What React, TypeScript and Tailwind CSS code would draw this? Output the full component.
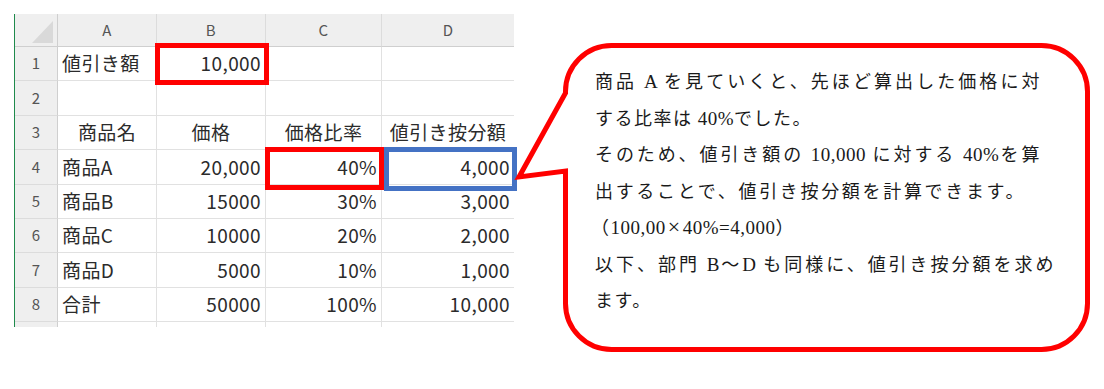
import React from 'react';

type Align = 'l' | 'r' | 'c';

interface Row {
  n: string;
  cells: { t: string; a: Align }[];
}

const rows: Row[] = [
  { n: '1', cells: [{ t: '値引き額', a: 'l' }, { t: '10,000', a: 'r' }, { t: '', a: 'l' }, { t: '', a: 'l' }] },
  { n: '2', cells: [{ t: '', a: 'l' }, { t: '', a: 'l' }, { t: '', a: 'l' }, { t: '', a: 'l' }] },
  { n: '3', cells: [{ t: '商品名', a: 'c' }, { t: '価格', a: 'c' }, { t: '価格比率', a: 'c' }, { t: '値引き按分額', a: 'c' }] },
  { n: '4', cells: [{ t: '商品A', a: 'l' }, { t: '20,000', a: 'r' }, { t: '40%', a: 'r' }, { t: '4,000', a: 'r' }] },
  { n: '5', cells: [{ t: '商品B', a: 'l' }, { t: '15000', a: 'r' }, { t: '30%', a: 'r' }, { t: '3,000', a: 'r' }] },
  { n: '6', cells: [{ t: '商品C', a: 'l' }, { t: '10000', a: 'r' }, { t: '20%', a: 'r' }, { t: '2,000', a: 'r' }] },
  { n: '7', cells: [{ t: '商品D', a: 'l' }, { t: '5000', a: 'r' }, { t: '10%', a: 'r' }, { t: '1,000', a: 'r' }] },
  { n: '8', cells: [{ t: '合計', a: 'l' }, { t: '50000', a: 'r' }, { t: '100%', a: 'r' }, { t: '10,000', a: 'r' }] },
];

const alignClass: Record<Align, string> = {
  l: 'justify-start',
  r: 'justify-end',
  c: 'justify-center',
};

// Latin run inside the callout text (Century-like serif)
function L({ children }: { children: React.ReactNode }) {
  return <span className="text-[19px] tracking-[0.5px] [font-family:'Liberation_Serif',serif]">{children}</span>;
}

function Sheet() {
  return (
    <div className="relative w-[500px] border-l border-[#1f8a4c] text-[19px] tracking-[0.4px] text-[#2b2b2b] [font-family:'Noto_Sans_CJK_JP',sans-serif]">
      <div className="grid grid-cols-[43px_99px_109px_116px_132px]">
        {/* Column headers */}
        <div className="h-[33px] bg-[#efefef] border-r border-b border-[#cfcfcf] flex items-end justify-end pr-[4px] pb-[3px]">
          <svg width="21" height="22" viewBox="0 0 21 22">
            <polygon points="0,22 21,22 21,0" fill="#d9d9d9" />
          </svg>
        </div>
        {['A', 'B', 'C', 'D'].map((c, i) => (
          <div
            key={c}
            className={`h-[33px] bg-[#efefef] border-b border-[#cfcfcf] flex items-center justify-center text-[15px] text-[#555] ${
              i < 3 ? 'border-r border-r-[#dcdcdc]' : ''
            }`}
          >
            {c}
          </div>
        ))}

        {rows.map((r) => (
          <React.Fragment key={r.n}>
            <div className="h-[34.4px] bg-[#efefef] border-r border-r-[#cfcfcf] border-b border-b-[#dcdcdc] flex items-center justify-center text-[15px] text-[#555]">
              {r.n}
            </div>
            {r.cells.map((c, i) => (
              <div
                key={i}
                className={`h-[34.4px] border-b border-[#e1e1e1] flex items-center px-[4px] whitespace-nowrap ${alignClass[c.a]} ${
                  i < 3 ? 'border-r' : ''
                }`}
              >
                {c.t}
              </div>
            ))}
          </React.Fragment>
        ))}

        {/* cut-off row 9 */}
        <div className="h-[5px] bg-[#efefef] border-r border-[#cfcfcf]" />
        <div className="h-[5px] border-r border-[#e1e1e1]" />
        <div className="h-[5px] border-r border-[#e1e1e1]" />
        <div className="h-[5px] border-r border-[#e1e1e1]" />
        <div className="h-[5px]" />
      </div>

      {/* Highlight boxes */}
      <div className="absolute left-[140px] top-[29px] w-[114px] h-[42px] border-[5px] border-[#ff0000]" />
      <div className="absolute left-[250px] top-[133px] w-[119px] h-[43px] border-[5px] border-[#ff0000]" />
      <div className="absolute left-[369px] top-[133px] w-[133px] h-[44px] border-[5px] border-[#4472c4]" />
    </div>
  );
}

function Callout() {
  return (
    <div className="relative flex-1 h-[389px]">
      <svg className="absolute inset-0 w-full h-full" viewBox="514 0 590 389">
        <path
          d="M565.5 93 L519 177 L565.5 171 V303.5 A46 46 0 0 0 611.5 349.5 H1041.5 A46 46 0 0 0 1087.5 303.5 V91.5 A46 46 0 0 0 1041.5 45.5 H611.5 A46 46 0 0 0 565.5 91.5 Z"
          fill="white"
          stroke="#ff0000"
          strokeWidth="5"
          strokeLinejoin="miter"
          strokeMiterlimit="10"
        />
      </svg>
      <div className="relative pl-[81px] pt-[64px] text-[18px] leading-[36.5px] tracking-[1.5px] text-[#1a1a1a] whitespace-nowrap [font-family:'Liberation_Serif','Noto_Sans_CJK_JP',serif]">
        <div className="w-[446px] [text-align-last:justify]">
          商品<L> A </L>を見ていくと、先ほど算出した価格に対
        </div>
        <div>
          する比率は<L> 40%</L>でした。
        </div>
        <div className="w-[446px] [text-align-last:justify]">
          そのため、値引き額の<L> 10,000 </L>に対する<L> 40%</L>を算
        </div>
        <div className="w-[430px] [text-align-last:justify]">出することで、値引き按分額を計算できます。</div>
        <div className="-ml-[4px]">
          （<L>100,00<span className="mx-[2px] text-[22px] leading-none">×</span>40%=4,000</L>）
        </div>
        <div className="w-[460px] [text-align-last:justify]">
          以下、部門<L> B</L>～<L>D </L>も同様に、値引き按分額を求め
        </div>
        <div>ます。</div>
      </div>
    </div>
  );
}

export default function App() {
  return (
    <div className="w-[1104px] h-[389px] bg-white flex overflow-hidden">
      <div className="pl-[14px] pt-[14px] w-[514px] shrink-0">
        <Sheet />
      </div>
      <Callout />
    </div>
  );
}
